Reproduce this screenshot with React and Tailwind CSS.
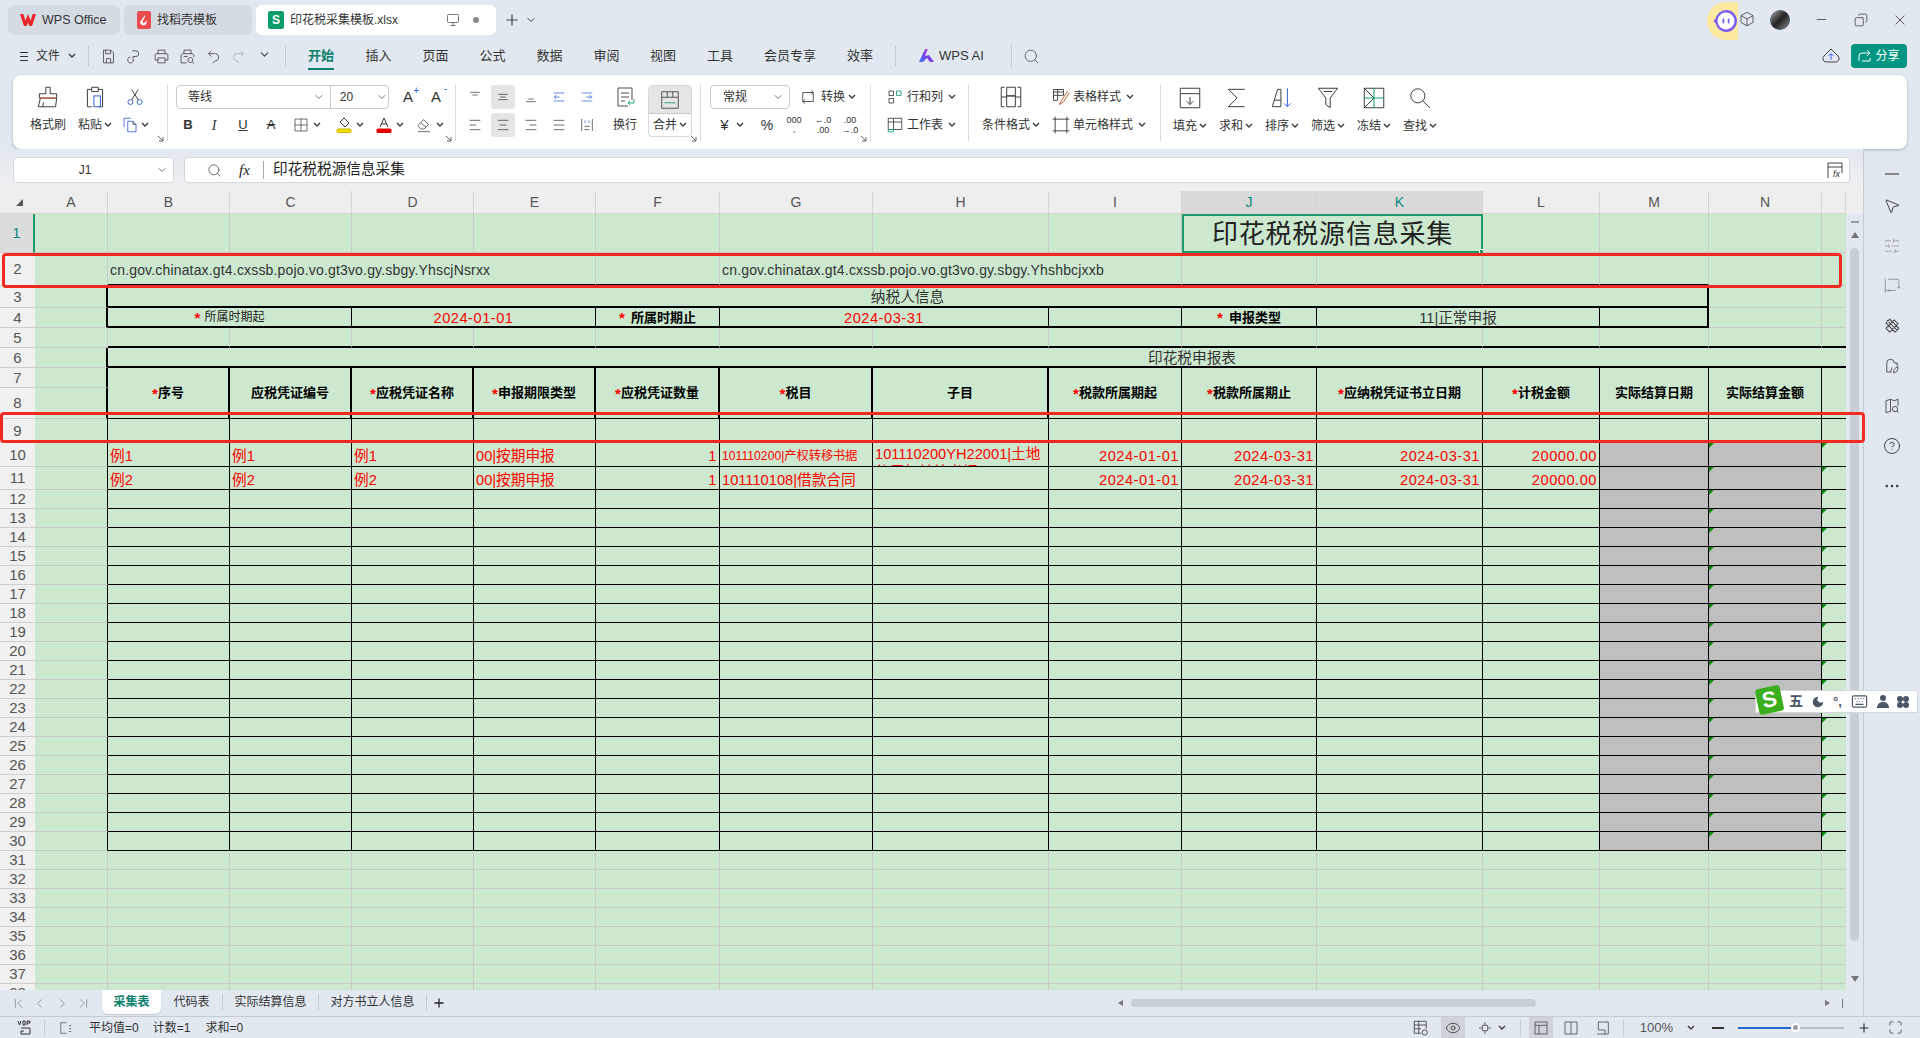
import React from 'react';
import { Minus, Plus, X, Search, Copy, ChevronDown, ChevronFirst, ChevronLast, ChevronLeft, ChevronRight, Eye, HelpCircle, MoreHorizontal, MousePointer2, SlidersHorizontal, Moon, Keyboard, Maximize } from 'lucide-react';

const COLS = ['B', 'C', 'D', 'E', 'F', 'G', 'H', 'I', 'J', 'K', 'L', 'M', 'N', 'O'];
const SPAN = { 2: 'col-span-2', 3: 'col-span-3', 4: 'col-span-4', 12: 'col-span-12', 14: 'col-span-14' };
const RIGHT = { g: 'border-r border-r-[#c9c9c9]', k: 'border-r border-r-black', K: 'border-r-2 border-r-black', n: '' };
const BOTTOM = { g: 'border-b border-b-[#c9c9c9]', k: 'border-b border-b-black', K: 'border-b-2 border-b-black' };

const Ic = ({ s = 20, w = 1.1, children, c = '#3a3a3a' }) => (
  <svg width={s} height={s} viewBox="0 0 24 24" fill="none" stroke={c} strokeWidth={w} className="shrink-0">{children}</svg>
);

const Chev = () => (
  <svg width="8" height="6" viewBox="0 0 8 6" fill="none" stroke="#3a3a3a" strokeWidth="1.4" className="shrink-0"><path d="M1 1l3 3 3-3" /></svg>
);

const Launcher = () => (
  <svg width="7" height="7" viewBox="0 0 7 7" fill="none" stroke="#666" strokeWidth="1" className="absolute right-[3px] bottom-[-1px]"><path d="M1 1l5 5M6 2v4H2" /></svg>
);

const Cell = ({ r = 'g', b = 'g', span, tall, gray, c = '', children }) => (
  <div className={`relative min-w-0 ${gray ? 'bg-[#bfbfbf]' : 'bg-[#cce8cf]'} ${RIGHT[r]} ${BOTTOM[b]} ${span ? SPAN[span] : ''} ${tall ? 'row-span-2' : ''} ${c}`}>{children}</div>
);

const RowNo = ({ n, on }) => (
  <div className={`flex items-center justify-center border-b border-b-[#cfcfcf] pt-[1px] text-[15px] ${on ? 'bg-[#dcdcdc] text-[#0b8a80] border-r-2 border-r-[#1f9a6c]' : 'bg-[#f0f0f0] text-[#555]'}`}>{n}</div>
);

const Star = () => <span className="text-[15px] leading-none font-bold text-[#ff0000]">*</span>;

const Head = ({ t, star, r = 'k' }) => (
  <Cell tall r={r} b="k" c="flex items-center justify-center text-[13px] font-bold text-black">
    {star && <Star />}{t}
  </Cell>
);

const Red = ({ right, c = 'text-[14.67px]', children }) => (
  <div className={`px-[2px] leading-[26px] text-[#ff0000] whitespace-nowrap ${right ? 'text-right tracking-[0.5px]' : ''} ${c}`}>{children}</div>
);

const DATA = {
  10: { B: '例1', C: '例1', D: '例1', E: '00|按期申报', F: '1', G: '101110200|产权转移书据', H: '101110200YH22001|土地使用权转让书据', I: '2024-01-01', J: '2024-03-31', K: '2024-03-31', L: '20000.00' },
  11: { B: '例2', C: '例2', D: '例2', E: '00|按期申报', F: '1', G: '101110108|借款合同', I: '2024-01-01', J: '2024-03-31', K: '2024-03-31', L: '20000.00' },
};

const BodyRow = ({ n }) => {
  const d = DATA[n] || {};
  return (
    <>
      <RowNo n={n} />
      <Cell r="k" />
      {COLS.map((col) => {
        const gray = n >= 10 && (col === 'M' || col === 'N');
        const tri = n >= 10 && (col === 'N' || col === 'O');
        const v = d[col];
        return (
          <Cell key={col} gray={gray} r={col === 'O' ? 'n' : 'k'} b="k" c="overflow-hidden">
            {tri && <div className="absolute left-0 top-0 h-0 w-0 border-t-[5px] border-r-[5px] border-t-[#0a8a0a] border-r-transparent" />}
            {v && col === 'H' && <div className="px-[2px] pt-[2px] text-[14.67px] leading-[18px] text-[#ff0000] break-all">{v}</div>}
            {v && col === 'G' && n === 10 && <Red c="text-[12.2px]">{v}</Red>}
            {v && col === 'G' && n === 11 && <Red>{v}</Red>}
            {v && 'BCDE'.includes(col) && <Red>{v}</Red>}
            {v && 'FIJKL'.includes(col) && <Red right>{v}</Red>}
          </Cell>
        );
      })}
    </>
  );
};

const PlainRow = ({ n }) => (
  <>
    <RowNo n={n} />
    <Cell />
    {COLS.map((col) => <Cell key={col} r={col === 'O' ? 'n' : 'g'} />)}
  </>
);

function Sheet() {
  const letters = ['A', ...COLS];
  return (
    <div className="grid h-[799px] w-[1846px] shrink-0 overflow-hidden grid-cols-[35px_73px_122px_122px_122px_122px_124px_153px_176px_133px_135px_166px_117px_109px_113px_24px] grid-rows-[23px_39px_33px_22px_20px_20px_20px_20px_31px_24px_24px_23px_repeat(27,19px)]">
      <div className="flex items-center justify-center border-b border-b-[#d4d4d4] bg-[#eeeeee] pl-[2px]">
        <svg width="8" height="8" viewBox="0 0 8 8"><path d="M8 1v7H1z" fill="#555" /></svg>
      </div>
      {letters.map((l) => {
        const on = l === 'J' || l === 'K';
        return (
          <div key={l} className={`flex items-center justify-center border-r border-r-[#d4d4d4] border-b border-b-[#d4d4d4] pt-[1px] text-[14px] ${on ? 'bg-[#d9d9d9] text-[#0b8a80]' : 'bg-[#eeeeee] text-[#555]'}`}>{l === 'O' ? '' : l}</div>
        );
      })}

      <RowNo n={1} on />
      <Cell />
      {COLS.slice(0, 8).map((col) => <Cell key={col} />)}
      <Cell span={2} r="n" b="g" c="border-2! border-[#1f9a6c]! flex items-center justify-center pt-[1px] text-[26px] tracking-[0.8px] text-[#222]">
        印花税税源信息采集
        <div className="absolute right-[-3px] bottom-[-3px] h-[5px] w-[5px] border border-white bg-[#1f9a6c]" />
      </Cell>
      {COLS.slice(10).map((col) => <Cell key={col} r={col === 'O' ? 'n' : 'g'} />)}

      <RowNo n={2} />
      <Cell />
      <Cell span={4} b="K" c="pl-[2px] text-[14px] leading-[35px] tracking-[0.17px] whitespace-nowrap text-[#333]">cn.gov.chinatax.gt4.cxssb.pojo.vo.gt3vo.gy.sbgy.YhscjNsrxx</Cell>
      <Cell b="K" />
      <Cell span={3} b="K" c="pl-[2px] text-[14px] leading-[35px] tracking-[0.17px] whitespace-nowrap text-[#333]">cn.gov.chinatax.gt4.cxssb.pojo.vo.gt3vo.gy.sbgy.Yhshbcjxxb</Cell>
      <Cell b="K" />
      <Cell b="K" />
      <Cell b="K" />
      <Cell b="K" />
      <Cell />
      <Cell r="n" />

      <RowNo n={3} />
      <Cell r="K" />
      <Cell span={12} r="K" b="K" c="flex items-center justify-center pt-[1px] text-[14.67px] text-[#333]">纳税人信息</Cell>
      <Cell />
      <Cell r="n" />

      <RowNo n={4} />
      <Cell r="K" />
      <Cell span={2} r="k" b="K" c="flex items-center justify-center gap-[4px] text-[12px] text-[#222]"><Star />所属时期起</Cell>
      <Cell span={2} r="k" b="K" c="flex items-center justify-center pt-[2px] text-[14.67px] tracking-[0.5px] text-[#ff0000]">2024-01-01</Cell>
      <Cell r="k" b="K" c="flex items-center justify-center gap-[6px] pt-[1px] text-[13px] font-bold text-black"><Star />所属时期止</Cell>
      <Cell span={2} r="k" b="K" c="flex items-center justify-center pt-[2px] text-[14.67px] tracking-[0.5px] text-[#ff0000]">2024-03-31</Cell>
      <Cell r="k" b="K" />
      <Cell r="k" b="K" c="flex items-center justify-center gap-[6px] pt-[1px] text-[13px] font-bold text-black"><Star />申报类型</Cell>
      <Cell span={2} r="k" b="K" c="flex items-center justify-center pt-[2px] text-[14.67px] text-[#333]">11|正常申报</Cell>
      <Cell r="K" b="K" />
      <Cell />
      <Cell r="n" />

      <RowNo n={5} />
      <Cell />
      {COLS.map((col) => <Cell key={col} b="K" r={col === 'O' ? 'n' : 'g'} />)}

      <RowNo n={6} />
      <Cell r="K" />
      <Cell span={14} r="n" b="K" c="flex items-center justify-center pl-[430px] pt-[1px] text-[14.67px] text-[#333]">印花税申报表</Cell>

      <RowNo n={7} />
      <Cell r="K" />
      <Head star t="序号" r="K" />
      <Head t="应税凭证编号" r="K" />
      <Head star t="应税凭证名称" r="K" />
      <Head star t="申报期限类型" r="K" />
      <Head star t="应税凭证数量" r="K" />
      <Head star t="税目" r="K" />
      <Head t="子目" r="K" />
      <Head star t="税款所属期起" />
      <Head star t="税款所属期止" />
      <Head star t="应纳税凭证书立日期" />
      <Head star t="计税金额" />
      <Head t="实际结算日期" />
      <Head t="实际结算金额" />
      <Cell tall r="n" b="k" />

      <RowNo n={8} />
      <Cell r="K" />

      {Array.from({ length: 22 }, (_, i) => <BodyRow key={i} n={i + 9} />)}
      {Array.from({ length: 8 }, (_, i) => <PlainRow key={i} n={i + 31} />)}
    </div>
  );
}

const TabLogoW = () => (
  <svg width="16" height="14" viewBox="0 0 16 14"><path d="M0 1h3.4l2 6.6L8 1l2.6 6.6 2-6.6H16l-4 12h-2.6L8 9.6 6.6 13H4z" fill="#e8262a" /></svg>
);

function TitleBar() {
  return (
    <div className="flex h-[40px] shrink-0 items-start pt-[5px]">
      <div className="ml-[8px] flex h-[30px] w-[112px] items-center gap-[6px] rounded-md bg-[#d5dbe3] pl-[12px] text-[12.5px] text-[#333]">
        <TabLogoW />WPS Office
      </div>
      <div className="ml-[4px] flex h-[30px] w-[128px] items-center gap-[6px] rounded-md bg-[#d5dbe3] pl-[13px] text-[12px] text-[#333]">
        <svg width="14" height="18" viewBox="0 0 14 18"><rect width="14" height="18" rx="2" fill="#ee4b4f" /><path d="M8 4c1 3-3 4-2 8 2 0 4-2 3-4 1 2 1 5-1 6-3 1-5-1-5-3" fill="#fff" /></svg>
        找稻壳模板
      </div>
      <div className="ml-[4px] flex h-[30px] w-[240px] items-center rounded-md bg-white pl-[12px] text-[12px] text-[#333]">
        <div className="flex h-[18px] w-[16px] items-center justify-center rounded-[2px] bg-[#0d9a6c] text-[12px] font-bold text-white">S</div>
        <span className="ml-[6px]">印花税采集模板.xlsx</span>
        <svg width="14" height="14" viewBox="0 0 14 14" fill="none" stroke="#777" className="ml-[48px]"><rect x="1.5" y="1.5" width="11" height="8" rx="1" /><path d="M7 10v2M4.5 12.5h5" /></svg>
        <div className="ml-[13px] h-[6px] w-[6px] rounded-full bg-[#888]" />
      </div>
      <Plus size={18} className="ml-[7px] mt-[6px] text-[#444]" strokeWidth={1.6} />
      <ChevronDown size={12} className="ml-[4px] mt-[9px] text-[#444]" />
      <div className="flex-1" />
      <div className="mt-[-3px] flex h-[38px] w-[31px] items-center justify-end rounded-l-full bg-[#fde9a0]">
        <svg width="25" height="24" viewBox="0 0 25 24"><path d="M1 12c0-1 .6-1.800 1.500-2A11 11 0 0 1 13 1a11 11 0 0 1 0 22 11 11 0 0 1-10.500-9C1.600 13.800 1 13 1 12z" fill="#7a5cf0" /><circle cx="13" cy="12" r="8.500" fill="#fff" /><rect x="9.500" y="9.500" width="1.800" height="5" rx="0.9" fill="#7a5cf0" /><rect x="14.700" y="9.500" width="1.800" height="5" rx="0.9" fill="#7a5cf0" /></svg>
      </div>
      <div className="mt-[5px]">
        <Ic s={18} c="#444"><path d="M12 3l8 4.500v9L12 21l-8-4.500v-9zM4 7.500l8 4.500 8-4.500M12 12v9" /></Ic>
      </div>
      <div className="ml-[14px] mt-[5px] h-[20px] w-[20px] rounded-full bg-linear-to-br from-[#bbb] via-[#222] to-[#999]" />
      <Minus size={15} className="ml-[24px] mt-[7px] text-[#333]" strokeWidth={1.2} />
      <Copy size={14} className="ml-[25px] mt-[8px] text-[#333] -scale-x-100" strokeWidth={1.2} />
      <X size={16} className="ml-[24px] mr-[12px] mt-[7px] text-[#333]" strokeWidth={1.2} />
    </div>
  );
}

const QuickIcons = () => (
  <>
    <div className="flex w-[26px] justify-center"><Ic s={17}><path d="M5 3h10l4 4v14H5zM8 3v5h7V3M9 21v-6h6v6" /></Ic></div>
    <div className="flex w-[27px] justify-center"><Ic s={17}><path d="M9 4h5a4 4 0 0 1 0 8h-4v3a4 4 0 1 1-4-2" /></Ic></div>
    <div className="flex w-[26px] justify-center"><Ic s={17}><path d="M7 8V3h10v5M5 8h14a2 2 0 0 1 2 2v7h-4M7 17H3v-7a2 2 0 0 1 2-2M7 14h10v7H7z" /></Ic></div>
    <div className="flex w-[26px] justify-center"><Ic s={17}><path d="M7 8V3h10v5M11 21H3v-11l2-2h14l2 2v3M7 13v-1h5" /><circle cx="16" cy="17" r="3.500" /><path d="M19 20l2.500 2" /></Ic></div>
    <div className="flex w-[26px] justify-center"><Ic s={17}><path d="M9 4L5 8l4 4M5 8h8a5 5 0 0 1 2 10l-4 3" /></Ic></div>
    <div className="flex w-[25px] justify-center"><Ic s={17} c="#aaa"><path d="M15 4l4 4-4 4M19 8h-8a5 5 0 0 0-2 10l4 3" /></Ic></div>
    <div className="flex w-[26px] justify-center"><ChevronDown size={13} className="text-[#444]" /></div>
  </>
);

function MenuBar() {
  const tabs = [['开始', 'w-[58px]'], ['插入', 'w-[57px]'], ['页面', 'w-[57px]'], ['公式', 'w-[57px]'], ['数据', 'w-[57px]'], ['审阅', 'w-[57px]'], ['视图', 'w-[56px]'], ['工具', 'w-[58px]'], ['会员专享', 'w-[82px]'], ['效率', 'w-[58px]']];
  return (
    <div className="flex h-[35px] shrink-0 items-center pb-[3px] text-[13px] text-[#333]">
      <div className="ml-[20px] flex w-[8px] flex-col gap-[3px]">
        <div className="h-px w-[8px] bg-[#333]" /><div className="h-px w-[8px] bg-[#333]" /><div className="h-px w-[8px] bg-[#333]" />
      </div>
      <span className="ml-[8px] text-[12px]">文件</span>
      <div className="ml-[8px]"><Chev /></div>
      <div className="ml-[12px] h-[20px] w-px bg-[#c5cbd3]" />
      <div className="ml-[6px] flex"><QuickIcons /></div>
      <div className="ml-[8px] h-[20px] w-px bg-[#c5cbd3]" />
      <div className="ml-[6px] flex">
        {tabs.map(([t, w], i) => (
          <div key={t} className={`flex h-[32px] flex-col items-center justify-center ${w} ${i === 0 ? 'font-bold text-[#0b7f6d]' : ''}`}>
            <span className={i === 0 ? 'mt-[4px] border-b-2 border-b-[#0b7f6d] pb-[2px]' : ''}>{t}</span>
          </div>
        ))}
      </div>
      <div className="ml-[6px] h-[20px] w-px bg-[#c5cbd3]" />
      <svg width="16" height="14" viewBox="0 0 16 14" className="ml-[23px]">
        <defs><linearGradient id="aiGrad" x1="0" x2="1" y1="1" y2="0"><stop offset="0" stopColor="#3b82f6" /><stop offset="0.5" stopColor="#7c3aed" /><stop offset="1" stopColor="#f472b6" /></linearGradient></defs>
        <path d="M0 13L6 0h3L6 7l4-1 5 7h-4L8 9l-4 4z" fill="url(#aiGrad)" />
      </svg>
      <span className="ml-[4px]">WPS AI</span>
      <div className="ml-[27px] h-[24px] w-px bg-[#c5cbd3]" />
      <Search size={17} className="ml-[11px] text-[#555]" strokeWidth={1.2} />
      <div className="flex-1" />
      <div className="mr-[11px]">
        <svg width="18" height="16" viewBox="0 0 18 16" fill="none" stroke="#444"><path d="M9 1l-7 7a3.500 3.500 0 0 0 3 6h8a3.500 3.500 0 0 0 3-6z" /><path d="M9 12V6M6.500 8L9 5.500 11.500 8" stroke="#3a6df0" /></svg>
      </div>
      <div className="mr-[13px] flex h-[24px] w-[56px] items-center justify-center gap-[3px] rounded-[4px] bg-[#009682] text-[12px] text-white">
        <svg width="14" height="14" viewBox="0 0 14 14" fill="none" stroke="#fff"><path d="M1 12V7a3 3 0 0 1 3-3h8M9 1l3 3-3 3M12 9v3H4" /></svg>
        分享
      </div>
    </div>
  );
}

const Two = ({ c = '', top, bottom }) => (
  <div className={`flex shrink-0 flex-col gap-[4px] ${c}`}>
    <div className="flex h-[24px] items-center">{top}</div>
    <div className="flex h-[24px] items-center">{bottom}</div>
  </div>
);

const Box = ({ w, on, children }) => (
  <div className={`flex h-[24px] shrink-0 items-center justify-center gap-[4px] ${w} ${on ? 'rounded-[3px] bg-[#e5e5e5]' : ''}`}>{children}</div>
);

const Big = ({ w, icon, label }) => (
  <Two c={w} top={<div className="flex w-full justify-center">{icon}</div>} bottom={<div className="flex w-full items-center justify-center gap-[2px]">{label}<Chev /></div>} />
);

const Group = ({ w, children }) => (
  <div className={`relative my-[-1px] flex h-[56px] shrink-0 border-r border-r-[#dcdcdc] ${w}`}>{children}</div>
);

const Lines = ({ ys }) => (
  <Ic s={16} w={1.1}>{ys.map(([x1, x2, y]) => <path key={y + '' + x1} d={`M${x1} ${y}H${x2}`} />)}</Ic>
);

function Ribbon() {
  return (
    <div className="ml-[13px] flex h-[74px] w-[1894px] shrink-0 items-start rounded-lg bg-white pt-[11px] text-[12px] text-[#333] shadow-[0_1px_3px_rgba(0,0,0,0.25)]">
      <Group w="w-[155px]">
        <Two c="ml-[13px] w-[44px] items-center"
          top={<Ic s={26} w={0.9}><path d="M10 3h4v6h6v4H4V9h6zM5 13l-2 8h16l1-8M7 21l1-4" /><path d="M4 13h16" stroke="#c0562a" /></Ic>}
          bottom={<span className="w-[44px] text-center">格式刷</span>} />
        <Big w="w-[50px]" icon={<Ic s={26} w={0.9}><path d="M5 5h4V3h6v2h4v16h-4M5 5v16h4M9 5v2h6V5" /><rect x="11" y="11" width="6" height="10" stroke="#2f62d8" /></Ic>} label={<span>粘贴</span>} />
        <Two c="w-[30px] items-center"
          top={<Ic s={20} c="#2f62d8"><circle cx="6.500" cy="18" r="3" /><circle cx="17.500" cy="18" r="3" /><path d="M8 15.500L16 3M16 15.500L8 3" stroke="#333" /></Ic>}
          bottom={<div className="flex items-center gap-[2px]"><Ic s={18} c="#2f62d8"><path d="M4 15V3h9M9 7h7l4 4v10H9z" /><path d="M16 7v4h4" stroke="#333" /></Ic><Chev /></div>} />
        <Launcher />
      </Group>

      <Group w="w-[288px]">
        <div className="ml-[8px] flex flex-col gap-[4px]">
          <div className="flex h-[24px] items-center">
            <div className="flex h-[24px] w-[213px] items-center rounded-[4px] border border-[#c9c9c9]">
              <span className="ml-[11px] w-[127px]">等线</span>
              <ChevronDown size={12} className="text-[#777]" />
              <div className="ml-[5px] h-full w-px bg-[#c9c9c9]" />
              <span className="ml-[9px] w-[37px]">20</span>
              <ChevronDown size={12} className="text-[#777]" />
            </div>
            <Box w="ml-[5px] w-[28px]"><span className="relative text-[15px]">A<span className="absolute right-[-6px] top-[-3px] text-[10px] text-[#2f62d8]">+</span></span></Box>
            <Box w="w-[28px]"><span className="relative text-[15px]">A<span className="absolute right-[-6px] top-[-5px] text-[10px] text-[#2f62d8]">-</span></span></Box>
          </div>
          <div className="flex h-[24px] items-center">
            <Box w="w-[24px]"><span className="text-[13px] font-bold">B</span></Box>
            <Box w="w-[28px]"><span className="font-['Liberation_Serif',serif] text-[14px] italic">I</span></Box>
            <Box w="w-[30px]"><span className="text-[13px] underline">U</span></Box>
            <Box w="w-[26px]"><span className="text-[13px] line-through">A</span></Box>
            <Box w="w-[46px]"><Ic s={16}><path d="M3 3h18v18H3zM12 3v18M3 12h18" /></Ic><Chev /></Box>
            <Box w="w-[40px]"><svg width="16" height="16" viewBox="0 0 16 16" fill="none" stroke="#333"><path d="M8 1l5 5-4 4-5-5z" /><rect x="1" y="12" width="14" height="3.500" rx="1" fill="#f4e200" stroke="#c5b400" /></svg><Chev /></Box>
            <Box w="w-[40px]"><svg width="16" height="16" viewBox="0 0 16 16" fill="none" stroke="#333"><path d="M4 10L8 1l4 9M5.500 7h5" /><rect x="1" y="12" width="14" height="3.500" rx="0.5" fill="#e60000" stroke="#e60000" /></svg><Chev /></Box>
            <Box w="w-[40px]"><Ic s={16}><path d="M3 13l8-9 8 7-7 7H7zM7 9l8 6M3 22h18" /></Ic><Chev /></Box>
          </div>
        </div>
        <Launcher />
      </Group>

      <Group w="w-[245px]">
        <div className="ml-[5px] flex flex-col gap-[4px]">
          <div className="flex h-[24px] items-center">
            <Box w="w-[28px]"><Lines ys={[[5, 19, 5], [8, 16, 9]]} /></Box>
            <Box w="w-[24px] mx-[2px]" on><Lines ys={[[5, 19, 8], [8, 16, 12], [5, 19, 16]]} /></Box>
            <Box w="w-[28px]"><Lines ys={[[8, 16, 15], [5, 19, 19]]} /></Box>
            <Box w="w-[28px]"><Ic s={16} c="#2f62d8"><path d="M4 6h16M13 12H5M8 9l-3 3 3 3M4 18h16" /></Ic></Box>
            <Box w="w-[28px]"><Ic s={16} c="#2f62d8"><path d="M4 6h16M11 12h8M16 9l3 3-3 3M4 18h16" /></Ic></Box>
          </div>
          <div className="flex h-[24px] items-center">
            <Box w="w-[28px]"><Lines ys={[[4, 20, 5], [4, 14, 12], [4, 20, 19]]} /></Box>
            <Box w="w-[24px] mx-[2px]" on><Lines ys={[[4, 20, 5], [7, 17, 12], [4, 20, 19]]} /></Box>
            <Box w="w-[28px]"><Lines ys={[[4, 20, 5], [10, 20, 12], [4, 20, 19]]} /></Box>
            <Box w="w-[28px]"><Lines ys={[[4, 20, 5], [4, 20, 12], [4, 20, 19]]} /></Box>
            <Box w="w-[28px]"><Ic s={16}><path d="M4 3v18M20 3v18M8 14h8M8 19h8" /><path d="M10 5L8 7l2 2M14 5l2 2-2 2" stroke="#2f62d8" /></Ic></Box>
          </div>
        </div>
        <Two c="ml-[6px] w-[36px] items-center"
          top={<Ic s={24} w={0.9}><path d="M5 3h14v12M5 3v18h10M8 8h8M8 12h8M8 16h4" /><path d="M21 14v4h-6M17 16l-2 2 2 2" stroke="#0d9a6c" /></Ic>}
          bottom={<span>换行</span>} />
        <div className="ml-[5px] flex h-[52px] w-[44px] flex-col overflow-hidden rounded-[4px] border border-[#d8d8d8]">
          <div className="flex h-[28px] items-center justify-center border-b border-b-[#c9c9c9] bg-[#e5e5e5]">
            <Ic s={22} w={0.9}><path d="M3 3h18v18H3zM3 9h18M9 3v6M15 3v6" /><path d="M6 15h12" stroke="#0d9a6c" /></Ic>
          </div>
          <div className="flex flex-1 items-center justify-center gap-[2px]">合并<Chev /></div>
        </div>
        <Launcher />
      </Group>

      <Group w="w-[170px]">
        <div className="ml-[6px] flex flex-col gap-[4px]">
          <div className="flex h-[24px] items-center">
            <div className="ml-[3px] flex h-[24px] w-[80px] items-center rounded-[4px] border border-[#c9c9c9]">
              <span className="ml-[12px] w-[49px]">常规</span>
              <ChevronDown size={12} className="text-[#777]" />
            </div>
            <div className="ml-[9px]"><Ic s={18}><path d="M5 18V6h14M16 3l3 3-3 3M19 6v12H5M8 15l-3 3 3 3" /></Ic></div>
            <span className="ml-[4px]">转换</span>
            <div className="ml-[3px]"><Chev /></div>
          </div>
          <div className="flex h-[24px] items-center">
            <Box w="w-[50px]"><span className="text-[15px]">¥</span><div className="ml-[3px]"><Chev /></div></Box>
            <Box w="w-[20px]"><span className="text-[14px]">%</span></Box>
            <Box w="w-[34px]"><span className="text-center text-[9px] leading-[9px]">000<br />,</span></Box>
            <Box w="w-[24px]"><span className="text-center text-[9px] leading-[10px]">←.0<br />.00</span></Box>
            <Box w="w-[30px]"><span className="text-center text-[9px] leading-[10px]">.00<br />→.0</span></Box>
          </div>
        </div>
        <Launcher />
      </Group>

      <Group w="w-[98px]">
        <div className="ml-[15px] flex flex-col gap-[4px]">
          <div className="flex h-[24px] items-center gap-[2px]">
            <Ic s={18}><path d="M4 4h6v6H4zM4 14h6v6H4z" /><path d="M14 4h6v6h-6z" stroke="#0d9a6c" /></Ic>
            <span className="ml-[1px]">行和列</span>
            <div className="ml-[3px]"><Chev /></div>
          </div>
          <div className="flex h-[24px] items-center gap-[2px]">
            <Ic s={18}><path d="M3 3h18v15H3zM3 8h18M10 3v15" /><path d="M3 21h7v-3H3z" stroke="#0d9a6c" /></Ic>
            <span className="ml-[1px]">工作表</span>
            <div className="ml-[3px]"><Chev /></div>
          </div>
        </div>
      </Group>

      <Group w="w-[192px]">
        <Big w="ml-[10px] w-[64px]" icon={<Ic s={26} w={0.9}><path d="M6 3H3v18h3M18 3h3v18h-3M8 3h8v8H8zM8 11h8v10H8zM3 12h5M16 12h5" /></Ic>} label={<span className="whitespace-nowrap">条件格式</span>} />
        <div className="ml-[8px] flex flex-col gap-[4px]">
          <div className="flex h-[24px] items-center gap-[2px]">
            <Ic s={20}><path d="M3 3h12v7H3zM3 6h12M8 3v13H3v-6" /><path d="M20 5l-8 12-2 4 5-3 7-11" stroke="#c0562a" /></Ic>
            <span>表格样式</span>
            <div className="ml-[3px]"><Chev /></div>
          </div>
          <div className="flex h-[24px] items-center gap-[2px]">
            <Ic s={20}><path d="M5 2v20M19 2v20M2 5h20M2 19h20" /></Ic>
            <span>单元格样式</span>
            <div className="ml-[3px]"><Chev /></div>
          </div>
        </div>
      </Group>

      <div className="ml-[6px] flex">
        <Big w="w-[46px]" icon={<Ic s={26} w={0.9}><path d="M3 3h18v18H3zM3 8h18M12 11v7M9 15l3 3 3-3" /></Ic>} label={<span>填充</span>} />
        <Big w="w-[46px]" icon={<Ic s={26} w={0.9}><path d="M20 4H5l8 8-8 8h15" /></Ic>} label={<span>求和</span>} />
        <Big w="w-[46px]" icon={<Ic s={26} w={0.9}><path d="M3 20L8 4h3v16zM5 14h6" /><path d="M17 3v17M14 17l3 3 3-3" stroke="#2f62d8" /></Ic>} label={<span>排序</span>} />
        <Big w="w-[46px]" icon={<Ic s={26} w={0.9}><path d="M3 3h18l-7 9v9l-4-3v-6zM8 6h8" /></Ic>} label={<span>筛选</span>} />
        <Big w="w-[46px]" icon={<Ic s={26} w={0.9}><path d="M3 3h18v18H3zM3 3l9 9M3 21l9-9" /><path d="M3 12h18M12 3v18" stroke="#0d9a6c" /></Ic>} label={<span>冻结</span>} />
        <Big w="w-[46px]" icon={<Ic s={26} w={0.9}><circle cx="10" cy="10" r="6.500" /><path d="M15 15l6 6" /></Ic>} label={<span>查找</span>} />
      </div>
    </div>
  );
}

function FormulaBar() {
  return (
    <div className="flex h-[42px] shrink-0 items-start bg-linear-to-b from-[#e2e8f0] to-[#f0f0f0] pt-[8px]">
      <div className="ml-[13px] flex h-[26px] w-[161px] items-center rounded-[4px] border border-[#d4d7db] bg-white text-[12px] text-[#333]">
        <span className="w-[142px] text-center">J1</span>
        <ChevronDown size={12} className="text-[#777]" />
      </div>
      <div className="ml-[10px] flex h-[26px] w-[1666px] items-center rounded-[4px] border border-[#d4d7db] bg-white text-[14.67px] text-[#222]">
        <Search size={15} className="ml-[22px] text-[#444]" strokeWidth={1.2} />
        <span className="ml-[17px] w-[24px] font-['Liberation_Serif',serif] text-[15px] italic">fx</span>
        <div className="h-[18px] w-px bg-[#aaa]" />
        <span className="ml-[9px] pb-[2px]">印花税税源信息采集</span>
        <div className="flex-1" />
        <svg width="18" height="18" viewBox="0 0 18 18" fill="none" stroke="#444" className="mr-[5px]"><path d="M2 17V2h14v10M2 6h14" /><text x="7" y="16" fontSize="9" fontStyle="italic" fill="#333" stroke="none">fx</text></svg>
      </div>
    </div>
  );
}

function ScrollColumn() {
  return (
    <div className="flex h-[799px] w-[17px] shrink-0 flex-col items-center bg-[#e2e8f0]">
      <div className="h-[23px] w-full bg-[#eeeeee]" />
      <div className="mt-[7px] h-[1.5px] w-[8px] bg-[#999]" />
      <div className="mt-[9px] h-0 w-0 border-x-[4px] border-b-[6px] border-x-transparent border-b-[#777]" />
      <div className="mt-[10px] h-[693px] w-[9px] rounded-full bg-[#c7ced5]" />
      <div className="mt-[35px] h-0 w-0 border-x-[4px] border-t-[6px] border-x-transparent border-t-[#777]" />
    </div>
  );
}

function SheetTabs() {
  return (
    <div className="flex h-[26px] shrink-0 items-start text-[12px] text-[#333]">
      <div className="flex h-[26px] w-[102px] items-center pl-[11px] text-[#8f959d]">
        <ChevronFirst size={15} className="mr-[6px]" strokeWidth={1.5} />
        <ChevronLeft size={15} className="mr-[8px]" strokeWidth={1.5} />
        <ChevronRight size={15} className="mr-[6px]" strokeWidth={1.5} />
        <ChevronLast size={15} strokeWidth={1.5} />
      </div>
      <div className="flex h-[24px] w-[59px] items-center justify-center rounded-b-md bg-white font-bold text-[#0b7f6d] shadow-[0_1px_1px_rgba(0,0,0,0.15)]">采集表</div>
      <div className="flex h-[24px] w-[61px] items-center justify-center">代码表</div>
      <div className="mt-[4px] h-[16px] w-px bg-[#c5cbd3]" />
      <div className="flex h-[24px] w-[95px] items-center justify-center">实际结算信息</div>
      <div className="mt-[4px] h-[16px] w-px bg-[#c5cbd3]" />
      <div className="flex h-[24px] w-[107px] items-center justify-center">对方书立人信息</div>
      <div className="mt-[4px] h-[16px] w-px bg-[#c5cbd3]" />
      <Plus size={14} className="ml-[5px] mt-[6px] text-[#222]" strokeWidth={2.2} />
      <div className="ml-[672px] mt-[10px] h-0 w-0 border-y-[3.5px] border-r-[5px] border-y-transparent border-r-[#777]" />
      <div className="ml-[8px] mt-[9px] h-[8px] w-[405px] rounded-full bg-[#c7ced5]" />
      <div className="ml-[289px] mt-[10px] h-0 w-0 border-y-[3.5px] border-l-[5px] border-y-transparent border-l-[#777]" />
      <div className="ml-[12px] mt-[9px] h-[9px] w-px bg-[#777]" />
    </div>
  );
}

function RightPanel() {
  const icons = [
    <MousePointer2 size={18} strokeWidth={1.2} className="text-[#333]" />,
    <SlidersHorizontal size={18} strokeWidth={1.1} className="text-[#999]" />,
    <Ic s={18} c="#888"><path d="M3 3v18M7 3h14v12M21 15l-2-2M21 15l2-2M3 18h14M9 16l-2 2 2 2" /></Ic>,
    <Ic s={18} w={1.4}><path d="M5 4l15 15M9 3l-5 5 12 12 5-5zM15 4l5 5-11 11-5-5z" /></Ic>,
    <Ic s={18}><path d="M5 20V8a5 5 0 0 1 10 0h4v4M5 20h6M14 21c0-4 2-7 6-8 0 5-2 8-6 8zM12 14l-2 6" /></Ic>,
    <Ic s={18}><path d="M4 5l6-2 5 2 5-2v9M4 5v16l6-2 1 .5M10 3v16" /><circle cx="16" cy="16" r="3.500" /><path d="M18.500 18.500L21 21" /></Ic>,
    <HelpCircle size={18} strokeWidth={1.2} className="text-[#333]" />,
    <MoreHorizontal size={18} strokeWidth={1.4} className="text-[#333]" />,
  ];
  return (
    <div className="flex h-[867px] w-[57px] shrink-0 flex-col items-center border-l border-l-[#c5cbd3] pt-[24px]">
      <div className="h-[1.5px] w-[14px] bg-[#888]" />
      <div className="mt-[22px] flex flex-col gap-[22px]">
        {icons.map((icon, i) => <div key={i} className="flex h-[18px] w-[18px] items-center justify-center">{icon}</div>)}
      </div>
    </div>
  );
}

function StatusBar() {
  return (
    <div className="flex h-[22px] shrink-0 items-center border-t border-t-[#c5cbd3] text-[12px] text-[#333]">
      <div className="ml-[17px] w-[16px]">
        <svg width="14" height="15" viewBox="0 0 14 15" fill="none" stroke="#333"><path d="M1 1l1.500 4L4 1M6 1v4h2V1zM10 5V1h3v2h-3M4 8h9v6H4v-3h3" /></svg>
      </div>
      <div className="ml-[11px] h-[16px] w-px bg-[#c5cbd3]" />
      <div className="ml-[14px]"><Ic s={14}><path d="M3 3h10M3 21h10M3 3v18M17 8h4M17 13h4M17 18h4" /></Ic></div>
      <span className="ml-[16px]">平均值=0</span>
      <span className="ml-[14px]">计数=1</span>
      <span className="ml-[15px]">求和=0</span>
      <div className="flex-1" />
      <Ic s={18}><path d="M3 3h16v10M3 8h16M3 13h9M9 3v16M3 3v16h9" /><circle cx="17" cy="18" r="3.500" /></Ic>
      <div className="ml-[11px] flex h-[22px] w-[24px] items-center justify-center bg-[#ced3da]"><Eye size={16} strokeWidth={1.2} /></div>
      <div className="ml-[12px]"><Ic s={16}><path d="M8 8h8v8H8zM12 3v5M12 16v5M3 12h5M16 12h5" /></Ic></div>
      <div className="ml-[5px]"><Chev /></div>
      <div className="ml-[14px] h-[16px] w-px bg-[#c5cbd3]" />
      <div className="ml-[8px] flex h-[22px] w-[24px] items-center justify-center bg-[#ced3da]"><Ic s={16}><path d="M3 3h18v18H3zM3 8h18M9 8v13" /></Ic></div>
      <div className="ml-[10px]"><Ic s={16}><path d="M3 3h18v18H3zM12 3v18" /></Ic></div>
      <div className="ml-[16px]"><Ic s={16}><path d="M5 15V3h15v18H3M5 15h10v6" /></Ic></div>
      <div className="ml-[12px] h-[16px] w-px bg-[#c5cbd3]" />
      <span className="ml-[16px] text-[13px] text-[#555]">100%</span>
      <div className="ml-[14px]"><Chev /></div>
      <div className="ml-[17px] h-[2px] w-[12px] bg-[#333]" />
      <div className="ml-[14px] flex h-[2px] w-[106px] items-center bg-[#b9bec4]">
        <div className="h-[2px] w-[53px] bg-[#2468d8]" />
        <div className="h-[9px] w-[9px] rounded-full border-2 border-white bg-[#9aa0a6]" />
      </div>
      <Plus size={14} strokeWidth={2} className="ml-[13px]" />
      <Maximize size={15} strokeWidth={1.2} className="ml-[17px] mr-[17px]" />
    </div>
  );
}

function ImeBar() {
  return (
    <div className="absolute left-[1755px] top-[690px] flex h-[23px] w-[163px] items-center border border-[#d5d8dc] bg-white text-[#4a5568]">
      <div className="absolute left-[1px] top-[-4px] flex h-[26px] w-[25px] -rotate-12 items-center justify-center rounded-[3px] bg-[#3aaf1d] text-[22px] font-bold leading-none text-white">S</div>
      <span className="ml-[33px] text-[14px] font-bold">五</span>
      <Moon size={14} fill="#4a5568" strokeWidth={0} className="ml-[8px]" />
      <span className="ml-[8px] text-[13px] font-bold leading-none">°,</span>
      <Keyboard size={17} strokeWidth={1.6} className="ml-[9px]" />
      <svg width="14" height="16" viewBox="0 0 14 16" fill="#4a5568" className="ml-[8px]"><circle cx="7" cy="4" r="3" /><path d="M1 14c0-4 3-6 6-6s6 2 6 6z" /></svg>
      <svg width="14" height="14" viewBox="0 0 14 14" fill="#4a5568" className="ml-[6px]"><circle cx="4" cy="4" r="3" /><circle cx="10" cy="4" r="3" /><circle cx="4" cy="10" r="3" /><circle cx="10" cy="10" r="3" /></svg>
    </div>
  );
}

export default function App() {
  return (
    <div className="relative flex h-[1038px] w-[1920px] flex-col overflow-hidden bg-[#e2e8f0] font-['Liberation_Sans','Noto_Sans_CJK_SC',sans-serif]">
      <TitleBar />
      <MenuBar />
      <Ribbon />
      <div className="flex">
        <div className="flex w-[1863px] shrink-0 flex-col">
          <FormulaBar />
          <div className="flex">
            <Sheet />
            <ScrollColumn />
          </div>
          <SheetTabs />
        </div>
        <RightPanel />
      </div>
      <StatusBar />

      {/* red marks drawn on top of the sheet */}
      <div className="pointer-events-none absolute left-[2px] top-[253px] h-[35px] w-[1840px] rounded-[4px] border-[3px] border-[#f22a22]" />
      <div className="pointer-events-none absolute left-0 top-[412px] h-[31px] w-[1865px] rounded-[4px] border-[3px] border-[#f22a22]" />
      <ImeBar />
    </div>
  );
}
